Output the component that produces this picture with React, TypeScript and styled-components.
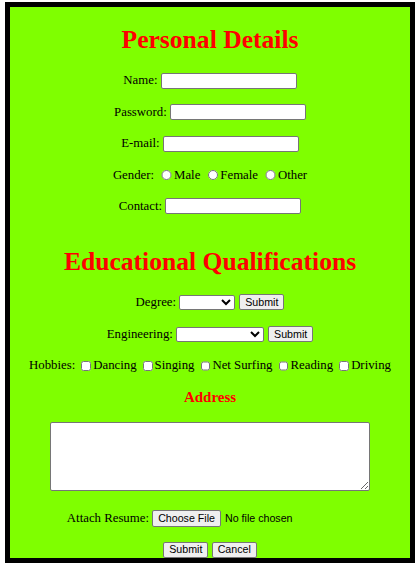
import { FC } from 'react'
import styled, { createGlobalStyle } from 'styled-components'

const GlobalStyle = createGlobalStyle`
  html,
  body {
    margin: 0;
    padding: 0;
    background: #fff;
  }
  body {
    font-family: 'Liberation Serif', 'Times New Roman', serif;
    font-size: 12.8px;
    color: #000;
  }
`

const App: FC = () => {
  return (
    <Page>
      <GlobalStyle />
      <Frame onSubmit={(e) => e.preventDefault()}>
        <Title $top={18}>Personal Details</Title>

        <Row $top={16}>
          <Caption>Name:</Caption>
          <TextInput type="text" $w={136} />
        </Row>
        <Row $top={11.5}>
          <Caption>Password:</Caption>
          <TextInput type="password" $w={136} />
        </Row>
        <Row $top={11.5}>
          <Caption>E-mail:</Caption>
          <TextInput type="email" $w={136} />
        </Row>
        <Row $top={11.5}>
          <Caption>Gender:</Caption>
          <Option>
            <Tick type="radio" name="gender" />
            Male
          </Option>
          <Option>
            <Tick type="radio" name="gender" />
            Female
          </Option>
          <Option>
            <Tick type="radio" name="gender" />
            Other
          </Option>
        </Row>
        <Row $top={11.5}>
          <Caption>Contact:</Caption>
          <TextInput type="text" $w={136} />
        </Row>

        <Title $top={30.8}>Educational Qualifications</Title>

        <Row $top={15.2}>
          <Caption>Degree:</Caption>
          <Select $w={56}>
            <option value=""></option>
          </Select>
          <Button type="button">Submit</Button>
        </Row>
        <Row $top={12}>
          <Caption>Engineering:</Caption>
          <Select $w={88}>
            <option value=""></option>
          </Select>
          <Button type="button">Submit</Button>
        </Row>
        <Row $top={12}>
          <Caption>Hobbies:</Caption>
          <Option>
            <Tick type="checkbox" />
            Dancing
          </Option>
          <Option>
            <Tick type="checkbox" />
            Singing
          </Option>
          <Option>
            <Tick type="checkbox" />
            Net Surfing
          </Option>
          <Option>
            <Tick type="checkbox" />
            Reading
          </Option>
          <Option>
            <Tick type="checkbox" />
            Driving
          </Option>
        </Row>

        <SubTitle>Address</SubTitle>
        <Address />

        <Row $top={17.3}>
          <Caption>Attach Resume:</Caption>
          <FilePicker>
            <Button type="button">Choose File</Button>
            <NoFile>No file chosen</NoFile>
          </FilePicker>
        </Row>

        <Actions>
          <Button type="submit">Submit</Button>
          <Button type="reset">Cancel</Button>
        </Actions>
      </Frame>
    </Page>
  )
}

const Page = styled.div`
  padding: 2px 0 0 5px;
`

const Frame = styled.form`
  box-sizing: border-box;
  width: 410px;
  height: 561px;
  border: 5px solid #000;
  background: #7fff00;
  display: flex;
  flex-direction: column;
  align-items: center;
`

const Title = styled.h1<{ $top: number }>`
  margin: ${(p) => p.$top}px 0 0;
  font-size: 25.6px;
  line-height: 30px;
  font-weight: bold;
  color: #ff0000;
`

const SubTitle = styled.h3`
  margin: 12px 0 0;
  font-size: 15px;
  line-height: 18px;
  font-weight: bold;
  color: #ff0000;
`

const Row = styled.div<{ $top: number }>`
  display: flex;
  align-items: center;
  height: 20px;
  margin-top: ${(p) => p.$top}px;
  white-space: nowrap;
`

const Caption = styled.span`
  margin-right: 3.2px;
`

const TextInput = styled.input<{ $w: number }>`
  box-sizing: border-box;
  width: ${(p) => p.$w}px;
  height: 16px;
  margin: 0;
  padding: 0 2px;
  border: 1px solid #767676;
  border-radius: 2px;
  background: #fff;
  font: 10.67px 'Liberation Sans', Arial, sans-serif;
`

const Option = styled.label`
  display: flex;
  align-items: center;
  & + & {
    margin-left: 3.2px;
  }
`

const Tick = styled.input`
  width: 10.4px;
  height: 10.4px;
  margin: 0 2.4px 0 4px;
  &[type='checkbox'] {
    width: 9.8px;
    height: 9.8px;
    margin: 0 2px 0 3px;
  }
`

const Select = styled.select<{ $w: number }>`
  box-sizing: border-box;
  width: ${(p) => p.$w}px;
  height: 15px;
  margin: 0 4px 0 0;
  padding: 0;
  border: 1px solid #767676;
  border-radius: 2px;
  background: #fff;
  font: 10.67px 'Liberation Sans', Arial, sans-serif;
`

const Button = styled.button`
  box-sizing: border-box;
  height: 16.5px;
  margin: 0;
  padding: 0 5px;
  border: 1px solid #767676;
  border-radius: 2px;
  background: #efefef;
  color: #000;
  font: 10.67px 'Liberation Sans', Arial, sans-serif;
  line-height: 1;
`

const Address = styled.textarea`
  box-sizing: border-box;
  width: 320px;
  height: 70px;
  margin: 15.7px 0 0;
  border: 1px solid #767676;
  border-radius: 2px;
  background: #fff;
  resize: both;
`

const FilePicker = styled.div`
  display: flex;
  align-items: center;
  gap: 4px;
  width: 201px;
`

const NoFile = styled.span`
  font: 10.67px 'Liberation Sans', Arial, sans-serif;
`

const Actions = styled.div`
  display: flex;
  gap: 3.3px;
  margin-top: 13.3px;
`

export default App
